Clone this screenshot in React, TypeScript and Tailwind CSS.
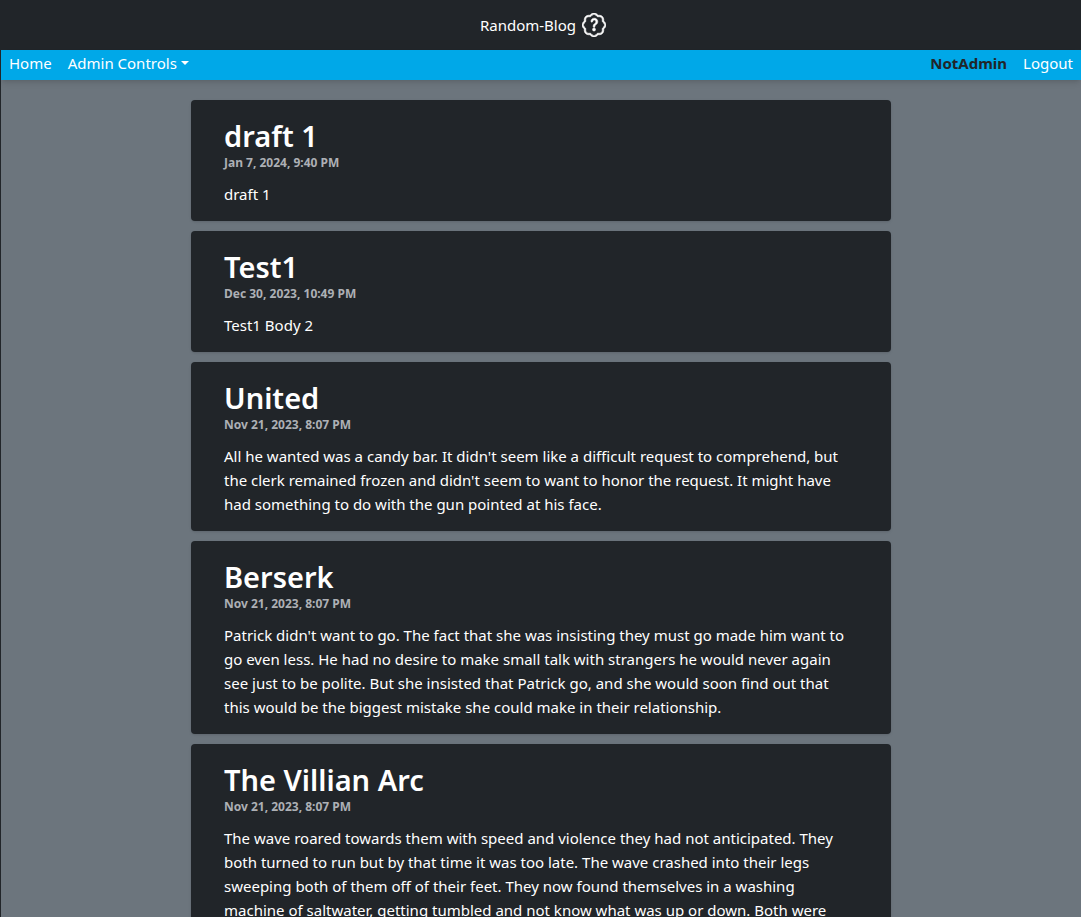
import { BsPatchQuestion } from "react-icons/bs";

type Post = { title: string; date: string; lines: string[] };

const posts: Post[] = [
  { title: "draft 1", date: "Jan 7, 2024, 9:40 PM", lines: ["draft 1"] },
  { title: "Test1", date: "Dec 30, 2023, 10:49 PM", lines: ["Test1 Body 2"] },
  {
    title: "United",
    date: "Nov 21, 2023, 8:07 PM",
    lines: [
      "All he wanted was a candy bar. It didn't seem like a difficult request to comprehend, but",
      "the clerk remained frozen and didn't seem to want to honor the request. It might have",
      "had something to do with the gun pointed at his face.",
    ],
  },
  {
    title: "Berserk",
    date: "Nov 21, 2023, 8:07 PM",
    lines: [
      "Patrick didn't want to go. The fact that she was insisting they must go made him want to",
      "go even less. He had no desire to make small talk with strangers he would never again",
      "see just to be polite. But she insisted that Patrick go, and she would soon find out that",
      "this would be the biggest mistake she could make in their relationship.",
    ],
  },
  {
    title: "The Villian Arc",
    date: "Nov 21, 2023, 8:07 PM",
    lines: [
      "The wave roared towards them with speed and violence they had not anticipated. They",
      "both turned to run but by that time it was too late. The wave crashed into their legs",
      "sweeping both of them off of their feet. They now found themselves in a washing",
      "machine of saltwater, getting tumbled and not know what was up or down. Both were",
    ],
  },
];

function PostCard({ post }: { post: Post }) {
  return (
    <article className="rounded bg-[#212529] px-[33px] pt-[17px] pb-[15px] shadow">
      <h2 className="text-[29px] leading-[38px] font-semibold">{post.title}</h2>
      <p className="text-xs leading-4 font-bold text-[#adb0b5]">{post.date}</p>
      <p className="mt-[11px] leading-6">
        {post.lines.map((line) => (
          <span key={line} className="block sm:whitespace-nowrap">
            {line}
          </span>
        ))}
      </p>
    </article>
  );
}

export default function App() {
  return (
    <div className="h-screen overflow-x-hidden overflow-y-auto border-l border-[#212529] bg-[#6c757d] font-['Noto_Sans',sans-serif] text-[15px] text-white [scrollbar-width:none]">
      <header className="flex h-[50px] items-center justify-center gap-[6px] bg-[#212529] pl-1">
        <span>Random-Blog</span>
        <BsPatchQuestion className="size-6 stroke-current stroke-[0.4]" aria-hidden="true" />
      </header>
      <nav className="flex h-[30px] items-center justify-between bg-[#00a8e8] px-2 pb-1 shadow-md">
        <div className="flex items-center gap-4">
          <a href="#home">Home</a>
          <button type="button" className="flex items-center gap-1">
            Admin Controls
            <svg viewBox="0 0 8 4" className="h-1 w-2 fill-current" aria-hidden="true">
              <path d="M0 0h8L4 4z" />
            </svg>
          </button>
        </div>
        <div className="flex items-center gap-4">
          <span className="font-bold text-[#212529]">NotAdmin</span>
          <a href="#logout">Logout</a>
        </div>
      </nav>
      <main className="mx-auto flex max-w-[700px] flex-col gap-[10px] py-5">
        {posts.map((post) => (
          <PostCard key={post.title} post={post} />
        ))}
      </main>
    </div>
  );
}
